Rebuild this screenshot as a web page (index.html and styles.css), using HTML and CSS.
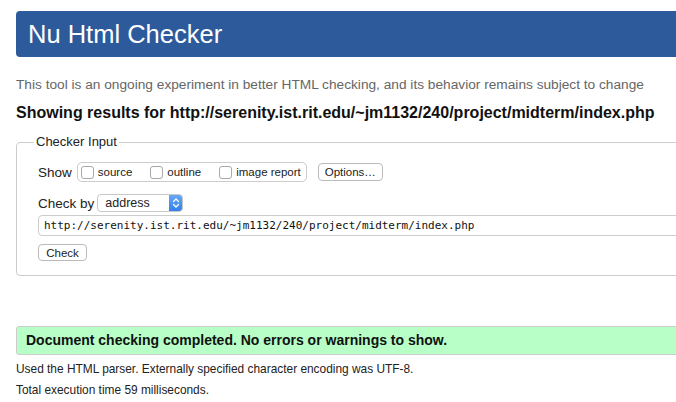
FILE: index.html
```html
<!DOCTYPE html>
<html>
<head>
<meta charset="utf-8">
<link rel="stylesheet" href="styles.css">
</head>
<body>
<div class="page">
  <h1 class="banner">Nu Html Checker</h1>
  <p class="desc">This tool is an ongoing experiment in better HTML checking, and its behavior remains subject to change</p>
  <h2 class="results">Showing results for http://serenity.ist.rit.edu/~jm1132/240/project/midterm/index.php</h2>
  <fieldset class="checker">
    <legend class="legend">Checker Input</legend>
    <div class="row show-row">
      <span class="row-label">Show</span>
      <div class="show-group">
        <label class="opt"><span class="cb"></span>source</label>
        <label class="opt"><span class="cb"></span>outline</label>
        <label class="opt last"><span class="cb"></span>image report</label>
      </div>
      <button class="btn options">Options…</button>
    </div>
    <div class="row by-row">
      <span class="row-label">Check by</span>
      <div class="select">
        <span class="select-text">address</span>
        <span class="select-arrow">
          <svg width="8" height="12" viewBox="0 0 8 12"><path d="M1.5 4.5 L4 2 L6.5 4.5 M1.5 7.5 L4 10 L6.5 7.5" fill="none" stroke="#fff" stroke-width="1.3" stroke-linecap="round" stroke-linejoin="round"/></svg>
        </span>
      </div>
    </div>
    <div class="url-input">http://serenity.ist.rit.edu/~jm1132/240/project/midterm/index.php</div>
    <button class="btn check">Check</button>
  </fieldset>
  <div class="success">Document checking completed. No errors or warnings to show.</div>
  <div class="details">
    <p>Used the HTML parser. Externally specified character encoding was UTF-8.</p>
    <p>Total execution time 59 milliseconds.</p>
  </div>
</div>
</body>
</html>
```

FILE: styles.css
```css
html, body {
  margin: 0;
  padding: 0;
  overflow: hidden;
  background: #fff;
}
body {
  font-family: "Liberation Sans", Arial, sans-serif;
  color: #222;
}
.page {
  padding: 11px 0 0 16px;
  margin-right: -30px;
}
.banner {
  margin: 0;
  height: 46px;
  line-height: 46px;
  background: #2d5a9b;
  border-radius: 4px;
  color: #fff;
  font-weight: normal;
  font-size: 25.5px;
  padding-left: 12px;
}
.desc {
  margin: 20px 0 0;
  font-size: 13.7px;
  line-height: 16px;
  color: #666;
}
.results {
  margin: 11px 0 0;
  font-size: 16px;
  line-height: 18px;
  font-weight: bold;
  color: #111;
}
.checker {
  margin: 12px 0 0;
  border: 1px solid #ccc;
  border-radius: 4px;
  padding: 0 0 14px 21px;
  min-width: 0;
}
.legend {
  font-size: 13px;
  line-height: 16px;
  padding: 0 2px;
  margin-left: -4px;
  color: #222;
}
.row {
  display: flex;
  align-items: center;
  height: 20px;
}
.show-row {
  margin-top: 12px;
}
.by-row {
  margin-top: 12px;
  height: 18px;
}
.row-label {
  font-size: 13.5px;
  color: #222;
}
.show-group {
  margin-left: 5px;
  height: 18px;
  display: flex;
  align-items: center;
  border: 1px solid #ccc;
  border-radius: 5px;
  padding: 0 5px 0 3px;
}
.opt {
  display: flex;
  align-items: center;
  font-size: 11.5px;
  color: #222;
  margin-right: 18px;
}
.opt.last {
  margin-right: 0;
}
.cb {
  width: 11px;
  height: 11px;
  border: 1px solid #a8a8a8;
  border-radius: 3px;
  background: #fff;
  margin-right: 4px;
}
.btn {
  font-family: "Liberation Sans", Arial, sans-serif;
  font-size: 11.5px;
  color: #222;
  background: #fff;
  border: 1px solid #bbb;
  border-radius: 4px;
  padding: 0;
  height: 18px;
}
.options {
  margin-left: 11px;
  width: 65px;
}
.select {
  margin-left: 3px;
  width: 86px;
  height: 18px;
  box-sizing: border-box;
  border: 1px solid #c8c8c8;
  border-radius: 4px;
  display: flex;
  align-items: center;
  justify-content: space-between;
  overflow: hidden;
}
.select-text {
  font-size: 12.5px;
  padding-left: 7px;
  color: #222;
}
.select-arrow {
  width: 14px;
  height: 18px;
  margin: -1px -1px -1px 0;
  background: linear-gradient(#6aaaf5, #2f7fe8);
  border-radius: 0 4px 4px 0;
  display: flex;
  align-items: center;
  justify-content: center;
}
.url-input {
  margin-top: 3px;
  height: 21px;
  box-sizing: border-box;
  border: 1px solid #ccc;
  border-radius: 4px;
  font-family: "DejaVu Sans Mono", "Liberation Mono", monospace;
  font-size: 11px;
  line-height: 19px;
  padding-left: 5px;
  color: #111;
}
.check {
  margin-top: 8px;
  width: 49px;
  height: 17px;
  display: block;
}
.success {
  margin-top: 50px;
  height: 29px;
  box-sizing: border-box;
  border: 1px solid #ccc;
  border-radius: 3px;
  background: #b7ffc6;
  font-weight: bold;
  font-size: 14px;
  line-height: 27px;
  padding-left: 9px;
  color: #111;
}
.details {
  margin-top: 4px;
}
.details p {
  margin: 0;
  font-size: 11.9px;
  line-height: 21px;
  color: #222;
}
```
